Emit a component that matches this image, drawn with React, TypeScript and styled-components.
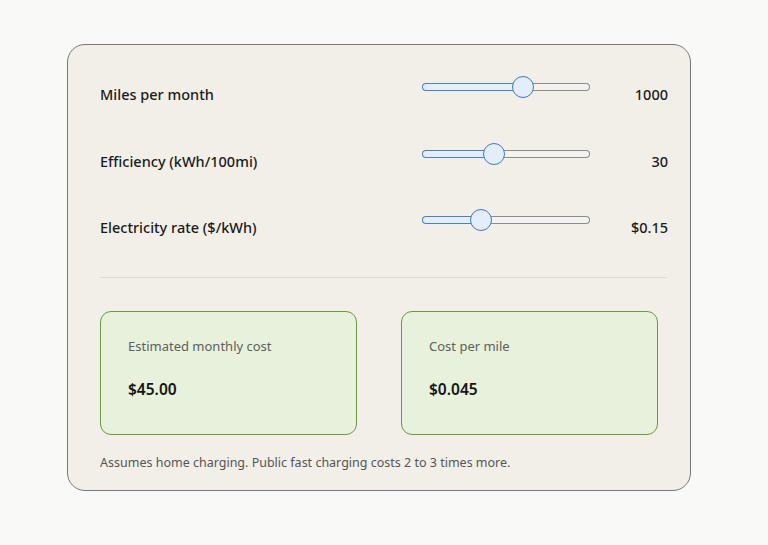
import styled, { createGlobalStyle } from "styled-components";

const GlobalStyle = createGlobalStyle`
  html, body {
    margin: 0;
    padding: 0;
    background: #f9f9f7;
  }
  body {
    font-family: "Noto Sans", "Open Sans", sans-serif;
    color: #1a1a1a;
  }
`;

const Page = styled.div`
  width: 768px;
  height: 545px;
  padding: 44px 0 0 67px;
  box-sizing: border-box;
`;

const Card = styled.div`
  width: 624px;
  height: 447px;
  box-sizing: border-box;
  background: #f2efe9;
  border: 1.5px solid #777;
  border-radius: 18px;
  padding: 31px 22px 0 32px;
  display: flex;
  flex-direction: column;
`;

const Rows = styled.div`
  display: flex;
  flex-direction: column;
  gap: 42.5px;
`;

const Row = styled.div`
  display: grid;
  grid-template-columns: 1fr 168px 78px;
  align-items: center;
  height: 24px;
`;

const Label = styled.div`
  font-size: 14.5px;
  font-weight: 500;
  color: #1b1b1b;
`;

const Value = styled.div`
  font-size: 14.5px;
  font-weight: 500;
  text-align: right;
  color: #1b1b1b;
`;

const SliderWrap = styled.div`
  position: relative;
  height: 22px;
  margin-bottom: 14px;
  display: flex;
  align-items: center;
`;

const Track = styled.div`
  display: flex;
  width: 100%;
  height: 8px;
`;

const Segment = styled.div<{ $filled?: boolean }>`
  box-sizing: border-box;
  height: 100%;
  border: 1.75px solid ${(p) => (p.$filled ? "#4a80c4" : "#8c8c8c")};
  background: ${(p) => (p.$filled ? "#e4eefa" : "#f4f2ee")};
  border-radius: ${(p) => (p.$filled ? "4px 0 0 4px" : "0 4px 4px 0")};
  ${(p) => (p.$filled ? "border-right: none;" : "flex: 1; border-left: none;")}
`;

const Thumb = styled.div`
  position: absolute;
  top: 0;
  width: 22px;
  height: 22px;
  box-sizing: border-box;
  border-radius: 50%;
  background: #e4eefa;
  border: 1.75px solid #3f78c0;
  margin-left: -11px;
`;

const Divider = styled.hr`
  border: none;
  border-top: 1px solid #dedbd5;
  margin: 44px 0 0 0;
  width: 567px;
`;

const Results = styled.div`
  display: grid;
  grid-template-columns: 257px 257px;
  gap: 44px;
  margin-top: 33px;
`;

const ResultBox = styled.div`
  height: 124px;
  box-sizing: border-box;
  background: #e8f1dc;
  border: 1.5px solid #6a9a40;
  border-radius: 11px;
  padding: 25px 27px;
  display: flex;
  flex-direction: column;
  gap: 23px;
`;

const ResultLabel = styled.div`
  font-size: 13px;
  line-height: 18px;
  color: #5e5e5e;
`;

const ResultValue = styled.div`
  font-size: 15.5px;
  line-height: 22px;
  font-weight: 600;
  color: #151515;
`;

const Note = styled.p`
  margin: 19px 0 0 0;
  font-size: 12.5px;
  line-height: 18px;
  color: #555;
`;

interface SliderProps {
  fraction: number;
}

function Slider({ fraction }: SliderProps) {
  const pos = `calc(11px + (100% - 22px) * ${fraction})`;
  return (
    <SliderWrap>
      <Track>
        <Segment $filled style={{ width: pos }} />
        <Segment />
      </Track>
      <Thumb style={{ left: pos }} />
    </SliderWrap>
  );
}

const inputs = [
  { label: "Miles per month", value: "1000", fraction: 0.615 },
  { label: "Efficiency (kWh/100mi)", value: "30", fraction: 0.42 },
  { label: "Electricity rate ($/kWh)", value: "$0.15", fraction: 0.33 },
];

export default function App() {
  return (
    <>
      <GlobalStyle />
      <Page>
        <Card>
          <Rows>
            {inputs.map((item) => (
              <Row key={item.label}>
                <Label>{item.label}</Label>
                <Slider fraction={item.fraction} />
                <Value>{item.value}</Value>
              </Row>
            ))}
          </Rows>
          <Divider />
          <Results>
            <ResultBox>
              <ResultLabel>Estimated monthly cost</ResultLabel>
              <ResultValue>$45.00</ResultValue>
            </ResultBox>
            <ResultBox>
              <ResultLabel>Cost per mile</ResultLabel>
              <ResultValue>$0.045</ResultValue>
            </ResultBox>
          </Results>
          <Note>Assumes home charging. Public fast charging costs 2 to 3 times more.</Note>
        </Card>
      </Page>
    </>
  );
}
